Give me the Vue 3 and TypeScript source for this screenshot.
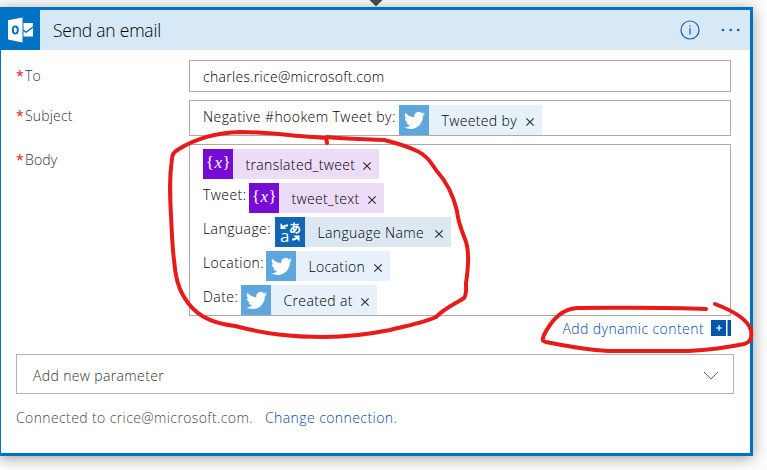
<script setup lang="ts">
type Kind = 'twitter' | 'variable' | 'translate'
interface Token { label: string; labelWidth: number; kind: Kind; name: string; width: number }
interface Field { name: string; kind: string; text?: string; lines: Token[] }

const fields: Field[] = [
  { name: 'To', kind: 'to', text: 'charles.rice@microsoft.com', lines: [] },
  {
    name: 'Subject', kind: 'subject', lines: [
      { label: 'Negative #hookem Tweet by:', labelWidth: 196, kind: 'twitter', name: 'Tweeted by', width: 143 },
    ],
  },
  {
    name: 'Body', kind: 'body', lines: [
      { label: '', labelWidth: 0, kind: 'variable', name: 'translated_tweet', width: 176 },
      { label: 'Tweet:', labelWidth: 46, kind: 'variable', name: 'tweet_text', width: 135 },
      { label: 'Language:', labelWidth: 72, kind: 'translate', name: 'Language Name', width: 176 },
      { label: 'Location:', labelWidth: 63, kind: 'twitter', name: 'Location', width: 124 },
      { label: 'Date:', labelWidth: 38, kind: 'twitter', name: 'Created at', width: 136 },
    ],
  },
]
</script>

<template>
  <main class="canvas">
    <svg class="connector" width="16" height="7" viewBox="0 0 16 7"><path d="M1.500 0H14.500L8 6.500Z" fill="#484848" /></svg>
    <section class="card">
      <header class="head">
        <div class="logo">
          <svg width="27" height="26" viewBox="0 0 27 26">
            <path d="M1 3.200 15.500.500v25L1 22.500Z" fill="#fff" />
            <ellipse cx="8.300" cy="13" rx="2.500" ry="3.600" fill="none" stroke="#0072c6" stroke-width="1.900" />
            <path d="M16.500 6H26v3.200l-7 5-2.500-1.700Z" fill="#fff" /><path d="M16.500 14.300 19 16l7-5v8.500h-9.500Z" fill="#fff" />
          </svg>
        </div>
        <h1 class="title">Send an email</h1>
        <svg class="info" width="20" height="20" viewBox="0 0 20 20" fill="none" stroke="#1160b7">
          <circle cx="10" cy="10" r="9" stroke-width="1.200" /><path d="M10 8v6.500M10 5.500v1.300" stroke-width="1.200" />
        </svg>
        <svg class="dots" width="20" height="4" viewBox="0 0 20 4" fill="#1160b7">
          <circle cx="2" cy="2" r="1.300" /><circle cx="9.700" cy="2" r="1.300" /><circle cx="17.200" cy="2" r="1.300" />
        </svg>
      </header>

      <div class="form">
        <template v-for="field in fields" :key="field.name">
          <label class="name"><i>*</i>{{ field.name }}</label>
          <div class="field" :class="field.kind">
            <span v-if="field.text">{{ field.text }}</span>
            <div v-for="row in field.lines" :key="row.name" class="line">
              <span class="label" :style="{ width: row.labelWidth + 'px' }">{{ row.label }}</span>
              <span class="chip" :class="row.kind" :style="{ width: row.width + 'px' }">
                <span class="icon">
                  <svg v-if="row.kind === 'twitter'" width="21" height="21" viewBox="0 0 24 24" fill="#fff"><path d="M23.950 4.570a10 10 0 0 1-2.820.770 4.960 4.960 0 0 0 2.160-2.720c-.950.550-2 .950-3.130 1.180a4.920 4.920 0 0 0-8.380 4.480C7.690 8.090 4.070 6.130 1.640 3.160a4.920 4.920 0 0 0 1.520 6.570 4.900 4.900 0 0 1-2.230-.610v.060a4.920 4.920 0 0 0 3.950 4.830 5 5 0 0 1-2.210.080 4.940 4.940 0 0 0 4.600 3.420A9.870 9.870 0 0 1 0 19.540a13.990 13.990 0 0 0 7.550 2.210c9.050 0 14-7.500 14-13.980 0-.210 0-.420-.020-.630a9.940 9.940 0 0 0 2.460-2.550Z" /></svg>
                  <span v-else-if="row.kind === 'variable'" class="glyph">{<em>x</em>}</span>
                  <svg v-else width="30" height="30" viewBox="0 0 30 30">
                    <text x="5" y="25" class="latin">a</text><text x="14" y="15.500" class="kana">あ</text>
                    <path d="M5.500 6v6h6l-2-2c1-.700 2-.700 3.500-.500V7.500c-2 0-3.500.300-5 1.200ZM24.500 24.500v-6h-6l2 2c-1 .700-2 1-3.500 1v2c2 0 3.500-.500 5-1.500Z" fill="#fff" />
                  </svg>
                </span>
                <span class="text">{{ row.name }}</span>
                <svg class="close" width="8" height="8" viewBox="0 0 8 8"><path d="M.300.300l7.400 7.400M7.700.300l-7.400 7.400" /></svg>
              </span>
            </div>
          </div>
        </template>
      </div>

      <div class="dynamic">
        <a>Add dynamic content</a>
        <svg width="20" height="16" viewBox="0 0 20 16"><path d="M0 0h15v16H0ZM16.500 0H20v16h-3.500Z" fill="#0055a9" /><path d="M5 8h6M8 5v6" stroke="#fff" stroke-width="1.200" /></svg>
      </div>
      <div class="select">
        <span>Add new parameter</span>
        <svg width="16" height="9" viewBox="0 0 16 9" fill="none" stroke="#666"><path d="M1 1l7 7 7-7" /></svg>
      </div>
      <footer class="foot"><span>Connected to crice@microsoft.com.</span><a class="change">Change connection.</a></footer>
    </section>

    <svg class="ink" width="767" height="470" viewBox="0 0 767 470" fill="none" stroke="#e81b1b" stroke-width="4" stroke-linecap="round" stroke-linejoin="round">
      <path d="M327 143L326 138C316 137 308 137 300 136C278 134 262 132 240 132C214 133 195 139 179 149C174 152 172 154 172 159C169 178 170 196 171 216C172 233 172 244 174 260C175 274 177 286 184 297C194 314 209 323 235 326C266 334 290 337 324 337C350 337 370 334 390 330C410 325 426 322 436 317C445 308 455 304 464 298C467 294 466 289 466 283C468 270 470 251 465 239C461 229 458 222 457 211C453 194 446 181 436 170C430 161 425 154 417 151C407 146 396 143 384 140C366 139 347 139 327 137" />
      <path d="M706 309C660 307 620 308 577 308C561 309 551 321 544 335C542 340 542 341 546 342C570 347 590 350 609 351H688C707 350 725 348 744 344C751 342 752 338 751 330C747 318 731 310 715 304" />
    </svg>
  </main>
</template>

<style>
body { margin: 0; overflow: hidden; background: #fff; }
</style>
<style scoped>
* { box-sizing: border-box; }
.canvas { position: relative; width: 767px; height: 470px; overflow: hidden; font-family: "Open Sans", "Noto Sans", sans-serif; font-size: 14px; font-weight: 300; color: #000; padding-top: 7px; background: #fdfdfd; }
.connector { position: absolute; left: 368px; top: 0; z-index: 1; }
.card { width: 755px; height: 449px; margin-left: -2px; border: 3px solid #0072c6; background: #fff; box-shadow: 0 2px 14px rgba(0,0,0,.38); }
.head { height: 40px; display: flex; align-items: center; background: #d7e9f6; }
.logo { width: 39px; height: 40px; background: #0072c6; display: flex; align-items: center; padding-left: 6px; }
.title { margin: 0 0 0 13px; font-size: 17.500px; font-weight: 300; line-height: 40px; letter-spacing: -.230px; flex: 1; white-space: nowrap; }
.info { margin-right: 21px; }
.dots { margin-right: 9px; }
.form { display: grid; grid-template-columns: 173px 542px; grid-template-rows: 32px 36px 172px; row-gap: 8px; padding: 10px 0 0 15px; }
.name { color: #333; line-height: 32px; white-space: nowrap; letter-spacing: .200px; }
.name i { font-style: normal; font-weight: 400; color: #e81123; margin-right: 1px; }
.field { border: 1px solid #aaa; padding-left: 13px; white-space: nowrap; line-height: 32px; background: #fff; letter-spacing: .290px; }
.subject, .body { padding-top: 4px; }
.line { display: flex; height: 30px; margin-bottom: 4px; }
.label { flex: none; line-height: 24px; letter-spacing: .430px; }
.chip { display: flex; align-items: center; height: 30px; background: #e6f1fb; line-height: 32px; }
.icon { width: 30px; height: 30px; flex: none; display: flex; align-items: center; justify-content: center; background: #5ea7de; margin-right: 12.500px; }
.variable { background: #ecdcf8; }
.variable .icon { background: #770bd6; }
.translate { background: #dce8f4; }
.translate .icon { background: #1267b4; }
.text { flex: 1; padding-top: 1px; letter-spacing: .350px; }
.close { margin: 4px 8px 0 0; stroke: #333; stroke-width: 1.200; overflow: visible; }
.glyph { font: 17px/28px "Liberation Serif", serif; color: #fff; height: 30px; letter-spacing: -.500px; }
.glyph em { font-style: italic; margin: 0 1px; }
.latin { font: 17px "Open Sans", sans-serif; fill: #fff; }
.kana { font: bold 12px "Noto Sans CJK JP", sans-serif; fill: #fff; }
.dynamic { height: 24px; display: flex; align-items: center; justify-content: flex-end; gap: 7px; padding-right: 19px; color: #004aa8; letter-spacing: .430px; }
.select { width: 718px; height: 40px; margin: 14px 0 0 15px; border: 1px solid #b4b4b4; display: flex; align-items: center; justify-content: space-between; padding: 2px 14px 0 16px; color: #333; letter-spacing: .360px; }
.foot { display: flex; padding: 14px 0 0 15px; line-height: 20px; color: #484848; letter-spacing: .390px; }
.change { margin-left: 12px; color: #004aa8; letter-spacing: .430px; }
.ink { position: absolute; inset: 0; z-index: 2; }
</style>
